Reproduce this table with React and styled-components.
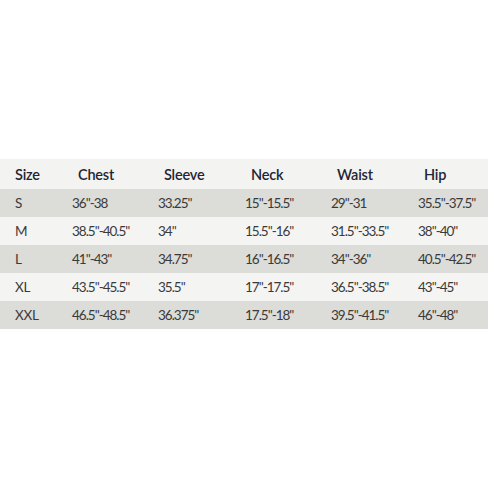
import React from "react";
import styled, { createGlobalStyle } from "styled-components";

const GlobalStyle = createGlobalStyle`
  body {
    margin: 0;
    background: #ffffff;
    font-family: Lato, "Open Sans", sans-serif;
  }
`;

const columns = ["Size", "Chest", "Sleeve", "Neck", "Waist", "Hip"];
const widths = [57, 86, 87, 86, 87, 85];

const rows = [
  ["S", "36\"-38", "33.25\"", "15\"-15.5\"", "29\"-31", "35.5\"-37.5\""],
  ["M", "38.5\"-40.5\"", "34\"", "15.5\"-16\"", "31.5\"-33.5\"", "38\"-40\""],
  ["L", "41\"-43\"", "34.75\"", "16\"-16.5\"", "34\"-36\"", "40.5\"-42.5\""],
  ["XL", "43.5\"-45.5\"", "35.5\"", "17\"-17.5\"", "36.5\"-38.5\"", "43\"-45\""],
  ["XXL", "46.5\"-48.5\"", "36.375\"", "17.5\"-18\"", "39.5\"-41.5\"", "46\"-48\""]
];

export default function App() {
  return (
    <>
      <GlobalStyle />
      <Page>
        <SizeTable>
          <colgroup>
            {widths.map((w, i) => (
              <col key={i} style={{ width: w }} />
            ))}
          </colgroup>
          <thead>
            <HeadRow>
              {columns.map((c, i) => (
                <HeadCell key={c} $first={i === 0}>
                  {c}
                </HeadCell>
              ))}
            </HeadRow>
          </thead>
          <tbody>
            {rows.map((r, i) => (
              <BodyRow key={r[0]} $shaded={i % 2 === 0}>
                {r.map((v, j) => (
                  <Cell key={j}>{v}</Cell>
                ))}
              </BodyRow>
            ))}
          </tbody>
        </SizeTable>
      </Page>
    </>
  );
}

const Page = styled.div`
  width: 490px;
  height: 490px;
  padding-top: 159px;
  box-sizing: border-box;
`;

const SizeTable = styled.table`
  width: 488px;
  border-collapse: collapse;
  table-layout: fixed;
`;

const HeadRow = styled.tr`
  height: 30px;
  background: #f3f3f2;
`;

const HeadCell = styled.th`
  text-align: left;
  padding: 0 0 0 ${p => (p.$first ? "15px" : "21px")};
  font-size: 14.5px;
  font-weight: 600;
  letter-spacing: -0.2px;
  color: #1f2533;
  white-space: nowrap;
`;

const BodyRow = styled.tr`
  height: 28px;
  background: ${p => (p.$shaded ? "#dcdcd8" : "#f4f4f3")};
`;

const Cell = styled.td`
  padding: 0 0 0 15px;
  font-size: 13.5px;
  letter-spacing: -1px;
  color: #3a3a3a;
  white-space: nowrap;

  &:first-child {
    letter-spacing: -0.3px;
  }
`;
